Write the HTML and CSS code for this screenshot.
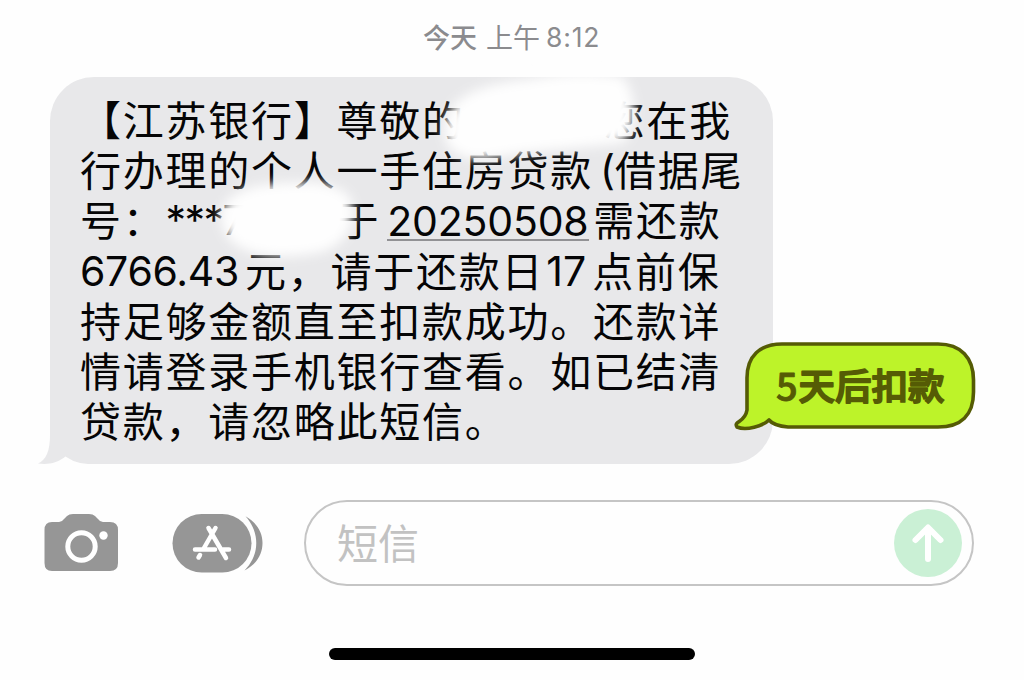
FILE: index.html
```html
<!DOCTYPE html>
<html lang="zh-CN">
<head>
<meta charset="utf-8">
<title>短信</title>
<link rel="stylesheet" href="styles.css">
</head>
<body>
<main class="screen">
  <header class="timestamp"><b class="day">今天</b><span class="period">上午</span><span class="clock">8:12</span></header>

  <section class="message">
    <svg class="tail" width="40" height="50" viewBox="0 0 40 50"><path d="M12 0V20C12 36 8 45 0 48.500C10 50 20 48 28 41L36 30V0Z" fill="#e8e8ea"/></svg>
    <p class="line"><span>【江苏银行】尊敬的</span><span class="gap-name"></span><span>您在我</span></p>
    <p class="line"><span>行办理的个人一手住房贷款</span><span class="latin paren">(</span><span>借据尾</span></p>
    <p class="line"><span>号：</span><span class="latin stars">***7</span><span>于</span><span class="latin date">20250508</span><span>需还款</span></p>
    <p class="line"><span class="latin amount">6766.43</span><span>元，请于还款日</span><span class="latin hour">17</span><span>点前保</span></p>
    <p class="line"><span>持足够金额直至扣款成功。还款详</span></p>
    <p class="line"><span>情请登录手机银行查看。如已结清</span></p>
    <p class="line"><span>贷款，请忽略此短信。</span></p>
    <svg class="smudges" width="723" height="200" viewBox="0 0 723 200">
      <defs><filter id="soft" x="-20%" y="-30%" width="140%" height="160%"><feGaussianBlur stdDeviation="6"/></filter></defs>
      <g fill="#fefefe" filter="url(#soft)">
        <path d="M397 40C406 15 440 6 480 2Q530-8 573 0C584 12 592 52 572 66C525 72 470 74 438 82C400 84 388 63 397 40Z"/>
        <path d="M171 137C176 111 215 106 240 106Q282 102 300 120C309 145 296 167 272 175C230 184 170 182 171 137Z"/>
      </g>
    </svg>
    <aside class="note">
      <svg width="246" height="94" viewBox="0 0 246 94">
        <path d="M16 72V40C16 18 29 6 51 6H207C230 6 242.500 20 242.500 42V54C242.500 77 230 89 207 89H57Q43 88 38 82C32 88 15 93 6 89C2 83 14 85 16 72Z" fill="#bdf329" stroke="#555b05" stroke-width="3.6" stroke-linejoin="round"/>
        <g class="note-text"><text class="note-digit" x="45" y="62.500" font-size="38">5</text><text x="67.500" y="61.500" font-size="36.500">天后扣款</text></g>
      </svg>
    </aside>
  </section>

  <footer class="compose">
    <svg class="camera" width="75" height="60" viewBox="0 0 75 60">
      <path d="M8 9H15Q18 9 20 6L23 3Q25 1 29 1H45Q49 1 51 3L54 6Q56 9 59 9H66Q74 9 74 17V50Q74 58 66 58H8Q.5 58 .5 50V17Q.5 9 8 9Z" fill="#969696"/>
      <circle cx="37.500" cy="33.500" r="13.700" fill="none" stroke="#fff" stroke-width="5"/><circle cx="59.500" cy="22.500" r="4.200" fill="#fff"/>
    </svg>
    <svg class="apps" width="92" height="60" viewBox="0 0 92 60">
      <rect x=".5" y="1" width="79" height="58.500" rx="29.250" fill="#969696"/>
      <path d="M73.500 3.200C85 10 90.500 19 90.500 30S85 51 72.500 57.500C88 42 88 19 73.500 3.200Z" fill="#969696"/>
      <g stroke="#fff" stroke-width="4.500" stroke-linecap="round" fill="none"><path d="M36.500 15L54 45M43.500 15L32 35M23 36.500H43M51 36.500H57M28 42L26.500 44.500"/></g>
    </svg>
    <div class="field"><span class="placeholder">短信</span>
      <svg class="send" width="68" height="68" viewBox="0 0 68 68"><circle cx="34" cy="34" r="34" fill="#caf0d5"/><path d="M34 50V19M21.500 31L34 18.500L46.500 31" fill="none" stroke="#fff" stroke-width="6" stroke-linecap="round" stroke-linejoin="round"/></svg>
    </div>
  </footer>
  <div class="home-bar"></div>
</main>
</body>
</html>
```
FILE: styles.css
```css
* { box-sizing: border-box; }
body {
  margin: 0;
  background: #fefefe;
  font-family: "Noto Sans CJK SC", sans-serif;
}
.screen {
  width: 1024px;
  height: 680px;
  overflow: hidden;
  display: flex;
  flex-direction: column;
}
.timestamp {
  height: 77px;
  padding: 17px 0 0 423px;
  display: flex;
  line-height: 40px;
  font-size: 27px;
  color: #8b8b8e;
}
.day { font-weight: 500; width: 63px; }
.period { width: 60px; }
.clock { font-family: Inter, sans-serif; font-size: 26.500px; letter-spacing: .8px; }
.message {
  position: relative;
  z-index: 0;
  width: 723px;
  height: 387px;
  margin-left: 50px;
  padding: 16px 0 0 30px;
  border-radius: 44px 44px 44px 38px;
  background: #e8e8ea;
  color: #050506;
}
.line {
  margin: 0;
  height: 50.200px;
  display: flex;
  line-height: 50.200px;
  font-size: 41px;
  letter-spacing: 1.750px;
  white-space: pre;
}
.latin { font-family: Inter, sans-serif; letter-spacing: 0; padding-top: 2px; }
.gap-name { width: 139px; }
.paren { width: 22px; padding-left: 7px; }
.stars { width: 172px; letter-spacing: -1.500px; }
.date {
  width: 202px;
  height: 48px;
  margin: 0 4px 0 7px;
  padding-top: 3px;
  letter-spacing: -.2px;
  border-bottom: 2px solid #929295;
}
.amount { width: 165px; letter-spacing: -.3px; }
.hour { width: 48px; padding-left: 2px; }
.tail { position: absolute; z-index: -1; left: -12px; bottom: -1px; }
.smudges { position: absolute; left: 0; top: 0; overflow: visible; }
.note { position: absolute; left: 681px; top: 261px; }
.note svg { display: block; }
.note-text {
  font-family: "Noto Sans CJK SC", sans-serif;
  font-weight: 500;
  fill: #555b05;
  stroke: #555b05;
  stroke-width: 1.800px;
  stroke-linejoin: round;
}
.note-digit { stroke-width: .900px; }
.compose {
  height: 86px;
  margin-top: 36px;
  padding-left: 44px;
  display: flex;
  align-items: center;
}
.apps { margin-left: 53px; }
.field {
  width: 670px;
  height: 86px;
  margin-left: 40px;
  padding: 0 10px 0 31px;
  display: flex;
  align-items: center;
  justify-content: space-between;
  border: 2px solid #c5c5c5;
  border-radius: 43px;
}
.placeholder { color: #c2c2c2; font-size: 41px; line-height: 60px; padding-bottom: 4px; }
.home-bar {
  width: 366px;
  height: 12px;
  margin: 62px 0 0 329px;
  border-radius: 6px;
  background: #000;
}
```
